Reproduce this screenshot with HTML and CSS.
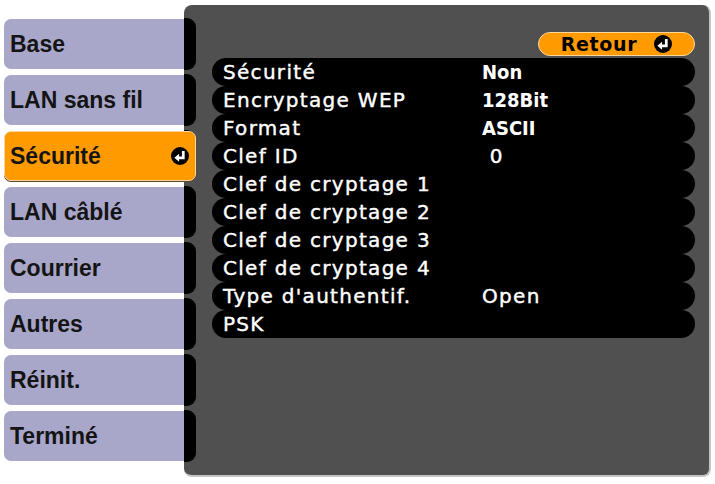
FILE: index.html
```html
<!DOCTYPE html>
<html lang="fr">
<head>
  <meta charset="UTF-8">
  <meta name="viewport" content="width=device-width, initial-scale=1.0">
  <title>Réseau - Sécurité</title>
  <link rel="stylesheet" href="styles.css">
</head>
<body>
  <div class="screen">
    <!-- Menu de gauche -->
    <div class="menu">
      <div class="tab">Base</div>
      <div class="tab">LAN sans fil</div>
      <div class="tab active">
        <span>Sécurité</span>
        <svg class="enter" viewBox="0 0 17 17"><circle cx="8.5" cy="8.5" r="8.5"/><path d="M11.6 3.8V10.2H6.8" /><polygon points="3.2,10.2 7.6,6.4 7.6,14"/></svg>
      </div>
      <div class="tab">LAN câblé</div>
      <div class="tab">Courrier</div>
      <div class="tab">Autres</div>
      <div class="tab">Réinit.</div>
      <div class="tab">Terminé</div>
    </div>

    <!-- Panneau des réglages -->
    <div class="panel">
      <div class="edges">
        <div class="edge"></div>
        <div class="edge"></div>
        <div class="edge"></div>
        <div class="edge"></div>
        <div class="edge"></div>
        <div class="edge"></div>
        <div class="edge"></div>
        <div class="edge"></div>
      </div>
      <div class="content">
        <div class="top">
          <div class="back">
            <span>Retour</span>
            <svg class="enter" viewBox="0 0 17 17"><circle cx="8.5" cy="8.5" r="8.5"/><path d="M11.6 3.8V10.2H6.8" /><polygon points="3.2,10.2 7.6,6.4 7.6,14"/></svg>
          </div>
        </div>
        <div class="rows">
          <div class="row"><span>Sécurité</span><span class="val strong">Non</span></div>
          <div class="row"><span>Encryptage WEP</span><span class="val strong">128Bit</span></div>
          <div class="row"><span>Format</span><span class="val strong">ASCII</span></div>
          <div class="row"><span>Clef ID</span><span class="val">&nbsp;0</span></div>
          <div class="row"><span>Clef de cryptage 1</span><span class="val"></span></div>
          <div class="row"><span>Clef de cryptage 2</span><span class="val"></span></div>
          <div class="row"><span>Clef de cryptage 3</span><span class="val"></span></div>
          <div class="row"><span>Clef de cryptage 4</span><span class="val"></span></div>
          <div class="row"><span>Type d'authentif.</span><span class="val">Open</span></div>
          <div class="row"><span>PSK</span><span class="val"></span></div>
        </div>
      </div>
    </div>
  </div>
</body>
</html>
```

FILE: styles.css
```css
body {
  margin: 0;
  background: #fff;
  font-family: "DejaVu Sans", Verdana, sans-serif;
}
.screen {
  display: flex;
  padding: 5px 0 0 4px;
}
.menu {
  width: 180px;
  display: flex;
  flex-direction: column;
  gap: 6px;
  padding-top: 14px;
}
.tab {
  position: relative;
  z-index: 1;
  display: flex;
  align-items: center;
  justify-content: space-between;
  box-sizing: border-box;
  height: 50px;
  padding: 0 7px 0 6px;
  background: #a8a6c9;
  border-radius: 7px 0 0 7px;
  font-family: "Liberation Sans", Arial, sans-serif;
  font-weight: bold;
  font-size: 23px;
  color: #141414;
}
.tab.active {
  z-index: 2;
  margin-right: -12px;
  padding-right: 6px;
  background: #ff9a00;
  border: 1px solid #ffd59a;
  border-radius: 7px;
  box-shadow: 0 1px 0 #5a4a30;
}
.tab.active span {
  margin-left: -1px;
}
.enter {
  width: 18px;
  height: 18px;
  flex: none;
}
.enter circle {
  fill: #000;
}
.enter path {
  fill: none;
  stroke: #fff;
  stroke-width: 2.6;
}
.enter polygon {
  fill: #fff;
}
.panel {
  display: flex;
  width: 525px;
  height: 470px;
  background: #505050;
  border-radius: 8px;
  border-right: 2px solid #c4c4c4;
  border-bottom: 2px solid #c4c4c4;
}
.edges {
  width: 12px;
  display: flex;
  flex-direction: column;
  gap: 4px;
  padding-top: 13px;
}
.edge {
  height: 52px;
  background: #000;
  border-radius: 0 9px 9px 0;
}
.content {
  flex: 1;
  padding: 27px 14px 0 16px;
}
.top {
  display: flex;
  justify-content: flex-end;
}
.back {
  display: flex;
  align-items: center;
  justify-content: center;
  gap: 17px;
  box-sizing: border-box;
  width: 157px;
  height: 24px;
  background: #ff9a00;
  border: 1px solid #ffd59a;
  border-radius: 12px;
  font-weight: bold;
  font-size: 19px;
  letter-spacing: 0.7px;
  color: #000;
}
.rows {
  margin-top: 2px;
}
.row {
  display: grid;
  grid-template-columns: 259px 1fr;
  height: 28px;
  line-height: 28px;
  padding-left: 11px;
  background: #000;
  border-radius: 14px;
  color: #fff;
  font-size: 20px;
  letter-spacing: 1.3px;
  white-space: nowrap;
  -webkit-text-stroke: 0.4px #fff;
}
.val.strong {
  font-family: "DejaVu Sans Condensed", "DejaVu Sans", sans-serif;
  font-stretch: condensed;
  font-weight: bold;
  letter-spacing: 0;
  -webkit-text-stroke: 0;
}
```
